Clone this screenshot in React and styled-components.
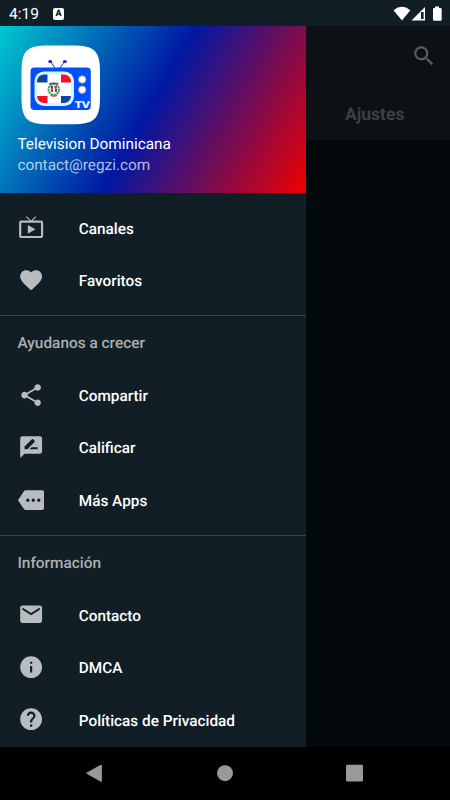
import React from 'react';
import styled, { createGlobalStyle } from 'styled-components';
import {
  MdLiveTv,
  MdFavorite,
  MdShare,
  MdRateReview,
  MdMore,
  MdEmail,
  MdInfo,
  MdHelp,
  MdSearch,
} from 'react-icons/md';

const GlobalStyle = createGlobalStyle`
  * {
    box-sizing: border-box;
  }

  body {
    margin: 0;
    background: #000;
    font-family: Roboto, 'Noto Sans', sans-serif;
    text-rendering: geometricPrecision;
  }
`;

const Screen = styled.div`
  display: flex;
  flex-direction: column;
  width: 450px;
  height: 800px;
  overflow: hidden;
`;

const StatusBar = styled.header`
  display: flex;
  align-items: center;
  flex: 0 0 26px;
  padding: 1px 7px 0 9px;
  background: #111e25;
  color: #fff;
`;

const Clock = styled.span`
  width: 44px;
  font-size: 15.5px;
  line-height: 18px;
`;

const Keyboard = styled.span`
  width: 11px;
  height: 12px;
  border-radius: 2px;
  background: #fff;
  color: #111e25;
  font-size: 9px;
  font-weight: 900;
  line-height: 12px;
  text-align: center;
`;

const StatusIcons = styled.svg`
  width: 52px;
  height: 18px;
  margin-left: auto;
`;

const Body = styled.main`
  display: flex;
  flex: 1;
  min-height: 0;
`;

const Drawer = styled.nav`
  width: 306.4px;
  background: #111e25;
`;

const Header = styled.div`
  height: 166.5px;
  padding: 17.5px 17.5px 17.5px 17.4px;
  background: linear-gradient(119.5deg, #00c9d0 0%, #0018a4 49%, #f00000 100%);
`;

const Logo = styled.svg`
  display: block;
  width: 87.5px;
  height: 83px;
`;

const AppName = styled.div`
  margin-top: 7px;
  color: #fff;
  font-size: 15.33px;
  line-height: 21.5px;
`;

const Mail = styled(AppName)`
  margin-top: 0;
  padding-top: 0.4px;
  color: rgba(255, 255, 255, 0.7);
`;

const Group = styled.ul`
  margin: 0;
  padding: ${(props) => (props.$first ? '8.75px 0' : '0 0 8.75px')};
  list-style: none;

  & + & {
    border-top: 1px solid #36434a;
  }
`;

const Subheader = styled.li`
  display: flex;
  align-items: center;
  height: 52.5px;
  padding: 1.4px 0 0 17.5px;
  color: #abafb1;
  font-size: 15.4px;
  font-weight: 500;
`;

const Item = styled.li`
  display: flex;
  align-items: center;
  gap: 35px;
  height: 52.5px;
  padding-left: 17.5px;
  color: #fff;
  font-size: 15.33px;
  font-weight: 500;

  svg {
    width: 26.25px;
    height: 26.25px;
    color: #b8bcbe;
  }
`;

const Label = styled.span`
  padding-top: 2.2px;
`;

const Behind = styled.section`
  flex: 1;
  background: #04090b;
`;

const AppBar = styled.div`
  display: flex;
  align-items: center;
  justify-content: flex-end;
  height: 61.5px;
  padding: 0 13.5px 1px 0;
  background: #0d1115;
  color: #5b5d5f;

  svg {
    width: 26px;
    height: 26px;
  }
`;

const Tab = styled.div`
  height: 52.5px;
  padding-left: 38.6px;
  background: #0d1115;
  color: #3d4042;
  font-size: 17.5px;
  font-weight: 700;
  line-height: 54.5px;
`;

const NavBar = styled.footer`
  flex: 0 0 52.6px;
  background: #000;

  svg {
    display: block;
  }
`;

const groups = [
  {
    items: [
      [MdLiveTv, 'Canales'],
      [MdFavorite, 'Favoritos'],
    ],
  },
  {
    title: 'Ayudanos a crecer',
    items: [
      [MdShare, 'Compartir'],
      [MdRateReview, 'Calificar'],
      [MdMore, 'Más Apps'],
    ],
  },
  {
    title: 'Información',
    items: [
      [MdEmail, 'Contacto'],
      [MdInfo, 'DMCA'],
      [MdHelp, 'Políticas de Privacidad'],
    ],
  },
];

const AppLogo = () => (
  <Logo viewBox="17.5 43.5 87.5 83">
    <defs>
      <clipPath id="tube">
        <rect x="37.5" y="74" width="34" height="28.5" rx="7" />
      </clipPath>
    </defs>
    <path
      d="M22 72C22 50 27 45 49 45H73C95 45 100.500 50 100.500 72V96.500C100.500 118.500 95 123.700 73 123.700H49C27 123.700 22 118.500 22 96.500z"
      fill="#fff"
    />
    <path d="M51 61l4.500 6.500M65 61l-4.500 6.500" stroke="#2226c8" strokeWidth="1" fill="none" />
    <ellipse cx="50.7" cy="61" rx="2" ry="1.600" fill="#2226c8" />
    <ellipse cx="65.300" cy="61" rx="2" ry="1.600" fill="#2226c8" />
    <rect x="31" y="67" width="60.300" height="42.500" rx="4" fill="#0050fa" />
    <rect x="35" y="71" width="39.500" height="34.500" rx="9.500" fill="#d5f5f6" />
    <g clipPath="url(#tube)">
      <rect x="37" y="73" width="35" height="30" fill="#fff" />
      <path d="M37 73h11v9h-11zM61.500 95.500h11v8h-11z" fill="#0d45a4" />
      <path d="M61.500 73h11v9h-11zM37 95.500h11v8h-11z" fill="#f50f2c" />
    </g>
    <circle cx="54.300" cy="89" r="5.300" fill="none" stroke="#3fa055" strokeWidth="1.900" strokeDasharray="2.400 0.500" />
    <path d="M51.300 85.500h2.300v2.800h-2.300zM55.500 88.500h2v3h-2z" fill="#2c50a4" />
    <path d="M55 85.500h2.300v2.800h-2.300zM51.500 88.500h2v3h-2z" fill="#d8283a" />
    <path d="M49.500 83.500q4.800-1.800 9.600 0" stroke="#27498f" strokeWidth="1.200" fill="none" />
    <path d="M51 95q3.300 1.200 6.600 0" stroke="#d8283a" strokeWidth="1.200" fill="none" />
    <circle cx="82.700" cy="79" r="3.700" fill="#fff" stroke="#a8a6a8" />
    <circle cx="82.700" cy="89.200" r="3.700" fill="#fff" stroke="#a8a6a8" />
    <text
      x="75.200"
      y="107"
      fill="#fff"
      fontFamily="DejaVu Sans"
      fontSize="9.300"
      fontWeight="700"
      textLength="15.300"
      lengthAdjust="spacingAndGlyphs"
    >
      TV
    </text>
  </Logo>
);

const App = () => {
  return (
    <Screen>
      <GlobalStyle />
      <StatusBar>
        <Clock>4:19</Clock>
        <Keyboard>A</Keyboard>
        <StatusIcons viewBox="391 4 52 18">
          <path d="M393.500 9.200Q402 2.300 410.300 9.200L402 19.500z" fill="#fff" />
          <path d="M425 6v13.500h-13.500z" fill="#fff" />
          <path d="M421 11h2.600v7h-2.600z" fill="#111e25" />
          <path d="M435 5.500h4v1.500h1.500q1.200 0 1.200 1.200v10.300q0 1.200-1.200 1.200h-6.300q-1.200 0-1.200-1.200V8.200q0-1.200 1.200-1.200H435z" fill="#fff" />
        </StatusIcons>
      </StatusBar>
      <Body>
        <Drawer>
          <Header>
            <AppLogo />
            <AppName>Television Dominicana</AppName>
            <Mail>contact@regzi.com</Mail>
          </Header>
          {groups.map((group, i) => (
            <Group key={i} $first={i === 0}>
              {group.title && <Subheader>{group.title}</Subheader>}
              {group.items.map(([Icon, label]) => (
                <Item key={label}>
                  <Icon />
                  <Label>{label}</Label>
                </Item>
              ))}
            </Group>
          ))}
        </Drawer>
        <Behind>
          <AppBar>
            <MdSearch />
          </AppBar>
          <Tab>Ajustes</Tab>
        </Behind>
      </Body>
      <NavBar>
        <svg width="450" height="52" viewBox="0 747.500 450 52">
          <path d="M101.300 765.500v16.500l-14.700-8.300z" fill="#999" stroke="#999" strokeLinejoin="round" />
          <circle cx="225" cy="773.700" r="8" fill="#999" />
          <rect x="346" y="765.200" width="17" height="16.700" rx="0.800" fill="#999" />
        </svg>
      </NavBar>
    </Screen>
  );
};

export default App;
